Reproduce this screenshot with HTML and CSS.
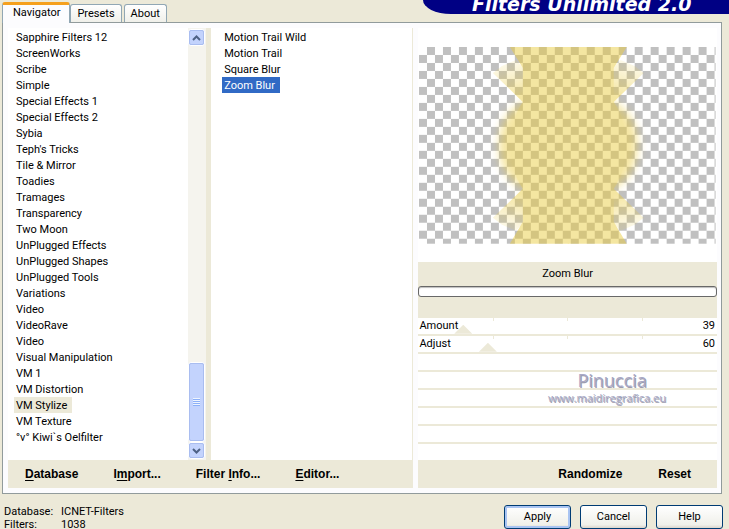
FILE: index.html
```html
<!DOCTYPE html>
<html lang="en">
<head>
  <meta charset="UTF-8">
  <meta name="viewport" content="width=device-width, initial-scale=1.0">
  <title>Filters Unlimited 2.0</title>
  <link rel="stylesheet" href="styles.css">
</head>
<body>
  <div class="top">
    <div class="tabs">
      <button class="tab active">Navigator</button>
      <button class="tab">Presets</button>
      <button class="tab">About</button>
    </div>
    <div class="banner"><h1>Filters Unlimited 2.0</h1></div>
  </div>

  <div class="panel">
    <div class="browser">
      <div class="lists">
        <ul class="list categories">
          <li><button>Sapphire Filters 12</button></li>
          <li><button>ScreenWorks</button></li>
          <li><button>Scribe</button></li>
          <li><button>Simple</button></li>
          <li><button>Special Effects 1</button></li>
          <li><button>Special Effects 2</button></li>
          <li><button>Sybia</button></li>
          <li><button>Teph's Tricks</button></li>
          <li><button>Tile &amp; Mirror</button></li>
          <li><button>Toadies</button></li>
          <li><button>Tramages</button></li>
          <li><button>Transparency</button></li>
          <li><button>Two Moon</button></li>
          <li><button>UnPlugged Effects</button></li>
          <li><button>UnPlugged Shapes</button></li>
          <li><button>UnPlugged Tools</button></li>
          <li><button>Variations</button></li>
          <li><button>Video</button></li>
          <li><button>VideoRave</button></li>
          <li><button>Video</button></li>
          <li><button>Visual Manipulation</button></li>
          <li><button>VM 1</button></li>
          <li><button>VM Distortion</button></li>
          <li><button class="current">VM Stylize</button></li>
          <li><button>VM Texture</button></li>
          <li><button>°v° Kiwi`s Oelfilter</button></li>
        </ul>
        <div class="scrollbar">
          <button class="arrow" aria-label="Scroll up">
            <svg viewBox="0 0 9 6" width="9" height="6"><path d="M1 5 4.500 1.500 8 5" /></svg>
          </button>
          <div class="track"><div class="thumb"><i></i></div></div>
          <button class="arrow" aria-label="Scroll down">
            <svg viewBox="0 0 9 6" width="9" height="6"><path d="M1 1 4.500 4.500 8 1" /></svg>
          </button>
        </div>
        <ul class="list effects">
          <li><button>Motion Trail Wild</button></li>
          <li><button>Motion Trail</button></li>
          <li><button>Square Blur</button></li>
          <li><button class="selected">Zoom Blur</button></li>
        </ul>
      </div>
      <div class="bar">
        <button><u>D</u>atabase</button>
        <button>I<u>m</u>port...</button>
        <button>Filter <u>I</u>nfo...</button>
        <button><u>E</u>ditor...</button>
      </div>
    </div>

    <div class="settings">
      <div class="preview">
        <svg class="canvas" viewBox="0 0 297 197">
          <defs>
            <pattern id="checker" width="16" height="16" patternUnits="userSpaceOnUse">
              <rect width="16" height="16" fill="#fff" />
              <path d="M8 0h8v8H8zM0 8h8v8H0z" fill="#c0c0c0" />
            </pattern>
            <filter id="soft" x="-30%" y="-20%" width="160%" height="140%"><feGaussianBlur stdDeviation="5" /></filter>
            <linearGradient id="fade" x1="0" y1="0" x2=".2" y2="1">
              <stop offset="0" stop-color="#eacb3d" stop-opacity=".1" />
              <stop offset="1" stop-color="#eacb3d" />
            </linearGradient>
            <path id="corner" d="M105 56 74 26 83 19 97 13 105 21Z" fill="url(#fade)" />
            <!-- left half of the shape, mirrored for the right half -->
            <g id="half">
              <path d="M150 55H104C88 64 80 78 80 98S88 133 104 142H150Z" filter="url(#soft)" />
              <path d="M91 0H150V197H91L104 175V142C96 130 92 116 92 98S96 67 104 55V21Z" />
              <use href="#corner" />
              <use href="#corner" transform="translate(0 197) scale(1 -1)" />
            </g>
          </defs>
          <rect width="297" height="197" fill="url(#checker)" />
          <g fill="#eacb3d" opacity=".48">
            <use href="#half" />
            <use href="#half" transform="translate(299 0) scale(-1 1)" />
          </g>
        </svg>
      </div>
      <div class="name">Zoom Blur</div>
      <div class="progress"></div>
      <div class="sliders">
        <div class="row ticks">
          <label for="amount">Amount</label>
          <input type="range" id="amount" min="0" max="255" value="39">
          <output for="amount">39</output>
        </div>
        <div class="row ticks">
          <label for="adjust">Adjust</label>
          <input type="range" id="adjust" min="0" max="255" value="60">
          <output for="adjust">60</output>
        </div>
        <div class="row"></div>
        <div class="row"></div>
        <div class="row"></div>
        <div class="row"></div>
        <div class="row"></div>
        <div class="row"></div>
        <div class="mark"><span class="author">Pinuccia</span><span>www.maidiregrafica.eu</span></div>
      </div>
      <div class="bar right">
        <button>Randomize</button>
        <button>Reset</button>
      </div>
    </div>
  </div>

  <div class="footer">
    <dl class="info">
      <dt>Database:</dt><dd>ICNET-Filters</dd>
      <dt>Filters:</dt><dd>1038</dd>
    </dl>
    <div class="actions">
      <button class="default">Apply</button>
      <button>Cancel</button>
      <button>Help</button>
    </div>
  </div>

</body>
</html>
```
FILE: styles.css
```css
* {
  box-sizing: border-box;
  margin: 0;
  padding: 0;
}
body {
  min-height: 100vh;
  overflow: hidden;
  background: #ece9d8;
  color: #000;
  font: 11px/16px Roboto, "Liberation Sans", sans-serif;
}
button {
  border: 0;
  background: none;
  color: inherit;
  font: inherit;
}
ul {
  list-style: none;
}

/* tabs and title */
.top {
  display: flex;
  justify-content: space-between;
  height: 22px;
  padding-left: 2px;
}
.tabs {
  display: flex;
  align-items: flex-end;
}
.tab {
  height: 18px;
  margin-right: 2px;
  padding: 0 6px;
  border: 1px solid #91a7b4;
  border-bottom: 0;
  border-radius: 3px 3px 0 0;
  background: linear-gradient(#fff, #f0f0ea);
}
.tab.active {
  position: relative;
  z-index: 1;
  height: 21px;
  margin: 0 0 -1px;
  padding: 0 9px 2px 10px;
  border-top: 3px solid #f5a01d;
  background: #fcfcfe;
}
.banner {
  width: 306px;
  height: 14px;
  overflow: hidden;
  border-bottom-left-radius: 28px 14px;
  background: #000084;
}
.banner h1 {
  margin-top: -7px;
  padding-left: 49px;
  color: #fff;
  font: italic bold 19px/22px "DejaVu Sans", sans-serif;
  white-space: nowrap;
}

.panel {
  display: flex;
  gap: 5px;
  margin: 0 7px 0 2px;
  padding: 5px 4px 5px 5px;
  border: 1px solid #919b9c;
  background: #fcfcfe;
}
.browser {
  flex: 405;
  display: flex;
  flex-direction: column;
  border-right: 1px solid #ece9d8;
}
.settings {
  flex: 299;
  display: flex;
  flex-direction: column;
  background: #ece9d8;
}

/* lists */
.lists {
  flex: 1;
  display: grid;
  grid-template-columns: 180fr 18px 206fr;
}
.list {
  background: #fff;
}
.list button {
  display: block;
  padding: 1px 5px 0 2px;
  line-height: 15px;
  white-space: nowrap;
}
.categories {
  padding: 1px 0 15px 6px;
}
.effects {
  padding: 1px 0 0 11px;
  border-left: 5px solid #ece9d8;
}
.list .current {
  background: #ece9d8;
}
.list .selected {
  background: #316ac5;
  color: #fff;
}
.scrollbar {
  display: flex;
  flex-direction: column;
  padding: 1px 1px 1px 0;
  background: #f5f4ee;
}
.arrow, .thumb {
  border: 1px solid #fff;
  border-radius: 3px;
  outline: 1px solid #a9bdf0;
  outline-offset: -2px;
  background: #c3d3fd;
}
.arrow {
  height: 17px;
  line-height: 0;
}
.arrow path {
  fill: none;
  stroke: #4d6185;
  stroke-width: 2;
}
.track {
  flex: 1;
  display: flex;
  align-items: flex-end;
}
.thumb {
  display: flex;
  justify-content: center;
  align-items: center;
  width: 100%;
  height: 80px;
}
.thumb i {
  width: 7px;
  height: 8px;
  background: repeating-linear-gradient(#eef4fe 0 1px, #8cb0f8 1px 2px);
}

.bar {
  display: flex;
  height: 28px;
  background: #ece9d8;
  font: bold 12px/28px "Liberation Sans", Arial, sans-serif;
}
.browser .bar {
  gap: 35px;
  padding-left: 17px;
}
.bar.right {
  justify-content: flex-end;
  gap: 36px;
  padding-right: 26px;
}
.bar u {
  text-underline-offset: 2px;
}

/* preview and sliders */
.preview {
  padding: 19px 1px 18px;
  background: #fff;
}
.canvas {
  display: block;
  width: 100%;
}
.name {
  height: 24px;
  line-height: 24px;
  text-align: center;
}
.progress {
  height: 11px;
  border: 1px solid #686868;
  border-radius: 3px;
  background: #fff;
  box-shadow: inset 0 1px 1px #bebebe;
}
.sliders {
  position: relative;
  padding-top: 21px;
}
.row {
  display: grid;
  grid-template-columns: 1fr 1fr;
  height: 18px;
  overflow: hidden;
  padding: 0 2px 0 1px;
  border-bottom: 2px solid #ece9d8;
  background: #fff;
}
.row:nth-child(8) {
  height: 16px;
  border-bottom: 0;
}
.ticks {
  background: linear-gradient(#ece9d8, #ece9d8) 25% 0 / 1px 3px no-repeat,
    linear-gradient(#ece9d8, #ece9d8) 50% 0 / 1px 3px no-repeat,
    linear-gradient(#ece9d8, #ece9d8) 75% 0 / 1px 3px no-repeat, #fff;
}
.row label, .row input, .row output {
  grid-row: 1;
}
.row label {
  grid-column: 1;
}
.row output {
  grid-column: 2;
  text-align: right;
}
.row input {
  grid-column: 1 / 3;
  height: 16px;
  margin: 0 -11px;
  appearance: none;
  background: none;
}
.row input::-webkit-slider-thumb {
  appearance: none;
  width: 18px;
  height: 9px;
  margin-top: 7px;
  background: #ece9d8;
  clip-path: polygon(50% 0, 100% 100%, 0 100%);
}
.mark {
  position: absolute;
  top: 73px;
  right: 51px;
  display: flex;
  flex-direction: column;
  align-items: center;
  color: #a9a9c6;
  font: 11px/16px "Open Sans", sans-serif;
  text-shadow: 1px 1px 0 #9c9cac;
}
.author {
  padding-left: 10px;
  font-size: 18px;
  line-height: 20px;
}

/* footer */
.footer {
  display: flex;
  justify-content: space-between;
  padding: 11px 6px 0 4px;
}
.info {
  display: grid;
  grid-template-columns: 57px auto;
  line-height: 13px;
}
.actions {
  display: flex;
  gap: 9px;
}
.actions button {
  width: 67px;
  height: 24px;
  border: 1px solid #003c74;
  border-radius: 3px;
  background: linear-gradient(#fff, #f0f0ea 85%, #dcd6cc);
}
.actions .default {
  box-shadow: inset 0 0 0 2px #a9c4f2;
}
```
